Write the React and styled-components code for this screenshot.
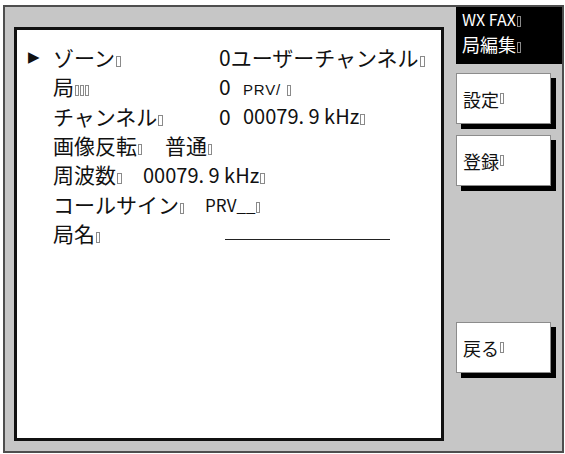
import React from "react";
import styled, { createGlobalStyle } from "styled-components";

const Global = createGlobalStyle`
  html, body { margin: 0; padding: 0; background: #ffffff; }
  body { font-family: "Noto Sans CJK JP", sans-serif; color: #111; }
  * { box-sizing: border-box; }
`;

const FONT = `"Noto Sans CJK JP", sans-serif`;

const Frame = styled.div`
  margin: 5px 0 0 3px;
  width: 561px;
  height: 448px;
  border: 2px solid #4e4e4e;
  background: #c6c6c6;
  display: flex;
  align-items: flex-start;
`;

const Panel = styled.div`
  margin: 20px 0 0 9px;
  width: 430px;
  height: 414px;
  border: 3px solid #111;
  background: #fff;
  padding: 13px 0 0 11px;
  display: flex;
  flex-direction: column;
`;

const Row = styled.div`
  display: flex;
  align-items: center;
  height: 29.3px;
  font-family: ${FONT};
  font-size: 21px;
  white-space: pre;
  line-height: 1;
`;

const Pointer = styled.span`
  width: 25px;
  flex: none;
  font-family: "DejaVu Sans", sans-serif;
  font-size: 15px;
  line-height: 1;
`;

const Label = styled.span`
  display: inline-block;
  width: ${(p) => p.$w}px;
  flex: none;
`;

const Lead = styled.span`
  display: inline-block;
  width: 24px;
  flex: none;
`;

const Small = styled.span`
  font-family: "Liberation Sans", sans-serif;
  font-size: 15px;
  letter-spacing: 0.8px;
`;

const Mid = styled.span`
  font-size: ${(p) => p.$size || 20}px;
  letter-spacing: ${(p) => p.$ls || 0}px;
`;

const Tofu = styled.span`
  display: inline-block;
  width: ${(p) => (p.$thin ? 4 : 5)}px;
  height: 11px;
  border: 1px solid #8a8a8a;
  margin-left: 1px;
  vertical-align: -1px;
`;

const Blank = styled.span`
  display: inline-block;
  width: 165px;
  height: 0;
  border-top: 1px solid #222;
  margin-top: 12px;
`;

const Side = styled.div`
  margin-left: 12px;
  width: 106px;
  display: flex;
  flex-direction: column;
`;

const Header = styled.div`
  height: 57px;
  background: #000;
  color: #fff;
  padding: 0 0 0 6px;
  display: flex;
  flex-direction: column;
`;

const HeadLine = styled.div`
  font-family: ${FONT};
  font-size: ${(p) => p.$size}px;
  line-height: ${(p) => p.$lh}px;
  height: ${(p) => p.$lh}px;
  white-space: pre;
`;

const SoftKey = styled.div`
  margin-top: ${(p) => p.$top}px;
  width: 95px;
  height: 51px;
  background: #fff;
  border: 1px solid #8c8c8c;
  box-shadow: 5px 5px 0 #000;
  display: flex;
  align-items: center;
  padding-left: 6px;
  font-family: ${FONT};
  font-size: 18px;
  white-space: pre;
`;

export default function App() {
  return (
    <>
      <Global />
      <Frame>
        <Panel>
          <Row>
            <Pointer>▶</Pointer>
            <Label $w={166}>
              ゾーン<Tofu />
            </Label>
            <span>
              0ユーザーチャンネル<Tofu />
            </span>
          </Row>
          <Row>
            <Pointer />
            <Label $w={166}>
              局<Tofu $thin />
              <Tofu $thin />
              <Tofu $thin />
            </Label>
            <Lead>0</Lead>
            <span>
              <Small>PRV/ </Small>
              <Tofu $thin />
            </span>
          </Row>
          <Row>
            <Pointer />
            <Label $w={166}>
              チャンネル<Tofu />
            </Label>
            <Lead>0</Lead>
            <Mid>
              00079. 9 kHz<Tofu />
            </Mid>
          </Row>
          <Row>
            <Pointer />
            <Label $w={112}>
              画像反転<Tofu $thin />
            </Label>
            <span>
              普通<Tofu $thin />
            </span>
          </Row>
          <Row>
            <Pointer />
            <Label $w={90}>
              周波数<Tofu />
            </Label>
            <Mid>
              00079. 9 kHz<Tofu />
            </Mid>
          </Row>
          <Row>
            <Pointer />
            <Label $w={152}>
              コールサイン<Tofu $thin />
            </Label>
            <Mid $size={17}>
              PRV__<Tofu $thin />
            </Mid>
          </Row>
          <Row>
            <Pointer />
            <Label $w={172}>
              局名<Tofu $thin />
            </Label>
            <Blank />
          </Row>
        </Panel>
        <Side>
          <Header>
            <HeadLine $size={16} $lh={24}>
              WX FAX<Tofu $thin />
            </HeadLine>
            <HeadLine $size={18} $lh={27}>
              局編集<Tofu $thin />
            </HeadLine>
          </Header>
          <SoftKey $top={9}>
            設定<Tofu $thin />
          </SoftKey>
          <SoftKey $top={11}>
            登録<Tofu $thin />
          </SoftKey>
          <SoftKey $top={136}>
            戻る<Tofu $thin />
          </SoftKey>
        </Side>
      </Frame>
    </>
  );
}
